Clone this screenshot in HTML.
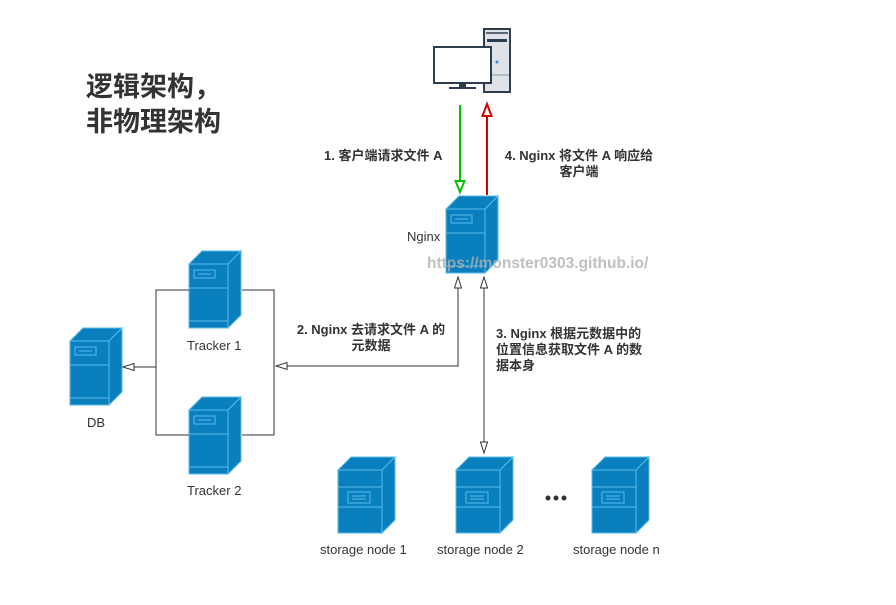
<!DOCTYPE html>
<html><head><meta charset="utf-8"><style>
html,body{margin:0;padding:0;background:#fff;}
body{width:896px;height:605px;position:relative;overflow:hidden;font-family:"Liberation Sans","Noto Sans CJK SC",sans-serif;color:#333;}
.t{position:absolute;font-size:12px;white-space:nowrap;}
.b{font-weight:bold;font-size:13px;text-align:center;position:absolute;line-height:16px;color:#333;white-space:nowrap;}
.title{position:absolute;left:86px;top:70px;font-size:27px;font-weight:bold;line-height:35px;color:#333;}
</style></head><body>
<svg width="896" height="605" style="position:absolute;left:0;top:0" xmlns="http://www.w3.org/2000/svg">
<defs>
<g id="srv">
 <polygon points="0,13 13,0 52,0 39,13" fill="#0a7fbe" stroke="#5ab8ea" stroke-width="1"/>
 <polygon points="39,13 52,0 52,64 39,77" fill="#0a7fbe" stroke="#5ab8ea" stroke-width="1"/>
 <rect x="0" y="13" width="39" height="64" fill="#0a7fbe" stroke="#5ab8ea" stroke-width="1"/>
 <rect x="5" y="19" width="21" height="8" fill="none" stroke="#5ab8ea"/>
 <line x1="9" y1="23" x2="22" y2="23" stroke="#5ab8ea"/>
 <line x1="0" y1="37" x2="39" y2="37" stroke="#5ab8ea"/>
 <line x1="0" y1="70" x2="39" y2="70" stroke="#5ab8ea"/>
</g>
<g id="st">
 <polygon points="0,13 13,0 57,0 44,13" fill="#0a7fbe" stroke="#5ab8ea" stroke-width="1"/>
 <polygon points="44,13 57,0 57,63 44,76" fill="#0a7fbe" stroke="#5ab8ea" stroke-width="1"/>
 <rect x="0" y="13" width="44" height="63" fill="#0a7fbe" stroke="#5ab8ea" stroke-width="1"/>
 <line x1="0" y1="30" x2="44" y2="30" stroke="#5ab8ea"/>
 <line x1="0" y1="50" x2="44" y2="50" stroke="#5ab8ea"/>
 <rect x="10" y="35" width="22" height="11" fill="none" stroke="#5ab8ea"/>
 <line x1="14" y1="39" x2="28" y2="39" stroke="#5ab8ea"/>
 <line x1="14" y1="42" x2="28" y2="42" stroke="#5ab8ea"/>
</g>
</defs>
<rect x="484" y="29" width="26" height="63" fill="#dfe3e8" stroke="#2e3d4d" stroke-width="2"/>
<line x1="486" y1="33" x2="508" y2="33" stroke="#2e3d4d" stroke-width="1.5"/>
<rect x="487" y="39" width="20" height="3" fill="#2e3d4d"/>
<line x1="485" y1="75" x2="509" y2="75" stroke="#8a96a3"/>
<circle cx="497" cy="62" r="1.5" fill="#3a8ee6"/>
<rect x="434" y="47" width="57" height="36" fill="#fff" stroke="#2e3d4d" stroke-width="2"/>
<rect x="459" y="83" width="7" height="5" fill="#2e3d4d"/>
<rect x="449" y="87" width="27" height="2" fill="#2e3d4d"/>
<line x1="460" y1="105" x2="460" y2="185" stroke="#00c000" stroke-width="2"/>
<polygon points="455.5,181 464.5,181 460,192" fill="#fff" stroke="#00c000" stroke-width="2"/>
<line x1="487" y1="195" x2="487" y2="112" stroke="#d00000" stroke-width="2"/>
<polygon points="482.5,116 491.5,116 487,104" fill="#fff" stroke="#d00000" stroke-width="2"/>
<use href="#srv" x="446" y="196"/>
<use href="#srv" x="189" y="251"/>
<use href="#srv" x="189" y="397"/>
<use href="#srv" x="70" y="328"/>
<use href="#st" x="338" y="457"/>
<use href="#st" x="456" y="457"/>
<use href="#st" x="592" y="457"/>
<g stroke="#333" stroke-width="1" fill="none">
<polyline points="458,287 458,366 287,366"/>
<polyline points="189,290 156,290 156,435 189,435"/>
<polyline points="242,290 274,290 274,435 242,435"/>
<line x1="156" y1="367" x2="133" y2="367"/>
<line x1="484" y1="287" x2="484" y2="443"/>
</g>
<g stroke="#333" stroke-width="1" fill="#fff">
<polygon points="454.5,288 461.5,288 458,277"/>
<polygon points="480.5,288 487.5,288 484,277"/>
<polygon points="480.5,442 487.5,442 484,453"/>
<polygon points="287,362.5 287,369.5 276,366"/>
<polygon points="134,363.5 134,370.5 123,367"/>
</g>
<circle cx="548" cy="498" r="2.5" fill="#333"/>
<circle cx="556" cy="498" r="2.5" fill="#333"/>
<circle cx="564" cy="498" r="2.5" fill="#333"/>
</svg>
<div class="title">逻辑架构，<br>非物理架构</div>
<div class="b" style="left:324px;top:148px;">1. 客户端请求文件 A</div>
<div class="b" style="left:498px;top:148px;width:162px;">4. Nginx 将文件 A 响应给<br>客户端</div>
<div class="t" style="left:407px;top:229px;font-size:13px;">Nginx</div>
<div class="t" style="left:427px;top:255px;font-size:15.5px;font-weight:bold;color:rgba(175,175,175,0.8);">https://monster0303.github.io/</div>
<div class="b" style="left:288px;top:322px;width:166px;">2. Nginx 去请求文件 A 的<br>元数据</div>
<div class="b" style="left:496px;top:326px;text-align:left;">3. Nginx 根据元数据中的<br>位置信息获取文件 A 的数<br>据本身</div>
<div class="t" style="left:187px;top:338px;font-size:13px;">Tracker 1</div>
<div class="t" style="left:187px;top:483px;font-size:13px;">Tracker 2</div>
<div class="t" style="left:87px;top:415px;font-size:13px;">DB</div>
<div class="t" style="left:320px;top:542px;font-size:13px;">storage node 1</div>
<div class="t" style="left:437px;top:542px;font-size:13px;">storage node 2</div>
<div class="t" style="left:573px;top:542px;font-size:13px;">storage node n</div>
</body></html>
